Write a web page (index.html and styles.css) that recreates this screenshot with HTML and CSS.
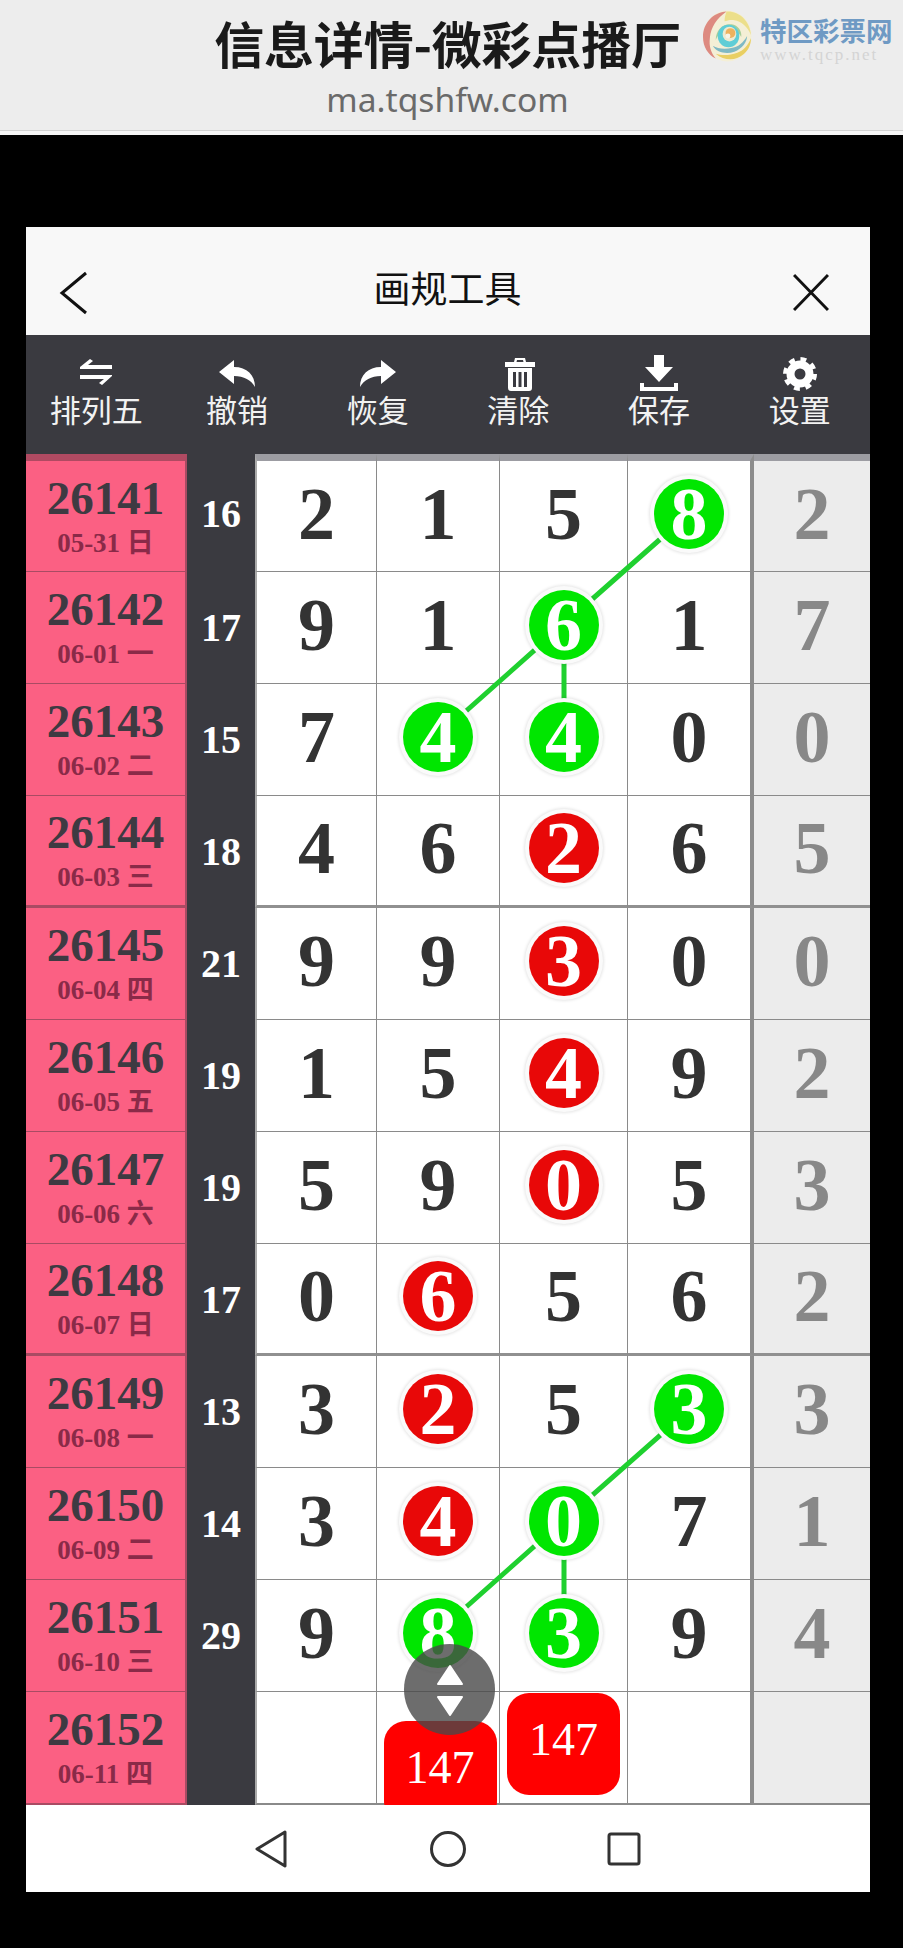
FILE: index.html
```html
<!DOCTYPE html>
<html lang="zh-CN">
<head>
  <meta charset="UTF-8" />
  <meta name="viewport" content="width=device-width, initial-scale=1.0" />
  <title>信息详情-微彩点播厅</title>
  <link rel="stylesheet" href="styles.css">
</head>
<body>
  <header class="site-head">
    <div class="site-title">信息详情-微彩点播厅</div>
    <div class="site-url">ma.tqshfw.com</div>
    <div class="brand">
      <svg class="brand-logo" viewBox="0 0 50 52">
        <ellipse cx="25" cy="26" rx="24.5" ry="26" fill="#f4efd6"/>
        <path d="M24 1C10 2 0 13 0 27c0 10 5 18 13 22-5-6-7-13-6-21C8 17 14 8 24 1Z" fill="#dd8a80"/>
        <path d="M24 1c12-1 24 9 25 24-4-9-10-14-17-15-3-1-7 0-10 1 0-4 1-7 2-10Z" fill="#ecdf8a"/>
        <path d="M13 44c8 7 20 8 28 1 5-4 8-10 8-17-3 8-8 13-14 15-8 3-16 3-22 1Z" fill="#e9cf63"/>
        <path d="M10 36c4 7 14 9 22 6 8-3 13-10 13-16-4 7-9 11-15 12-8 2-15 1-20-2Z" fill="#7fb9c4"/>
        <path d="M13 30c0-10 7-17 16-16 7 1 11 7 10 13-3-6-7-9-12-9-6 0-11 5-14 12Z" fill="#a8cf9a"/>
        <ellipse cx="26" cy="26" rx="11" ry="11.5" fill="#5fcdd6"/>
        <ellipse cx="27" cy="24" rx="7" ry="7.5" fill="#f0ead0"/>
        <ellipse cx="28" cy="23" rx="5" ry="5" fill="#eeb25e"/>
        <ellipse cx="25.5" cy="26" rx="2.5" ry="2.5" fill="#f8f4e8"/>
      </svg>
      <div class="brand-text">
        <div class="brand-name">特区彩票网</div>
        <div class="brand-site">www.tqcp.net</div>
      </div>
    </div>
  </header>

  <main class="card">
    <div class="titlebar">
      <svg class="bar-icon" viewBox="0 0 36 44"><path d="M30 2 6 22l24 20"/></svg>
      <div class="bar-title">画规工具</div>
      <svg class="bar-icon" viewBox="0 0 36 44"><path d="M1 4l34 35M35 4 1 39"/></svg>
    </div>

    <nav class="toolbar">
      <div class="tool">
        <svg class="tool-icon" viewBox="0 0 38 36"><path d="M3 12 13 4l3 2-5 4h24v4H3ZM35 21 25 30l-3-2 5-4H3v-4h32Z"/></svg>
        <span>排列五</span>
      </div>
      <div class="tool">
        <svg class="tool-icon" viewBox="0 0 38 36"><path d="M1 17 16 5v7c13 0 21 8 21 20-4-7-11-11-21-11v8Z"/></svg>
        <span>撤销</span>
      </div>
      <div class="tool">
        <svg class="tool-icon" viewBox="0 0 38 36"><path d="M37 17 22 5v7C9 12 1 20 1 32c4-7 11-11 21-11v8Z"/></svg>
        <span>恢复</span>
      </div>
      <div class="tool tool-bin">
        <svg class="tool-icon" viewBox="0 0 38 36"><path fill-rule="evenodd" d="M14 3h10l1 4h9v5H4V7h9ZM16 5l-.5 2h7L22 5ZM7 13h24v20a3 3 0 0 1-3 3H10a3 3 0 0 1-3-3ZM12 17v15h3V17ZM17.500 17v15h3V17ZM23 17v15h3V17Z"/></svg>
        <span>清除</span>
      </div>
      <div class="tool">
        <svg class="tool-icon" viewBox="0 0 38 36"><path d="M14 0h10v12h9L19 27 5 12h9ZM0 28h4v4h30v-4h4v8H0Z"/></svg>
        <span>保存</span>
      </div>
      <div class="tool">
        <svg class="tool-icon" viewBox="0 0 38 36">
          <circle class="gear-body" cx="19" cy="19" r="9.5"/>
          <circle class="gear-teeth" cx="19" cy="19" r="14.5"/>
        </svg>
        <span>设置</span>
      </div>
    </nav>

    <section class="board">
      <svg class="links" viewBox="0 0 844 1351">
        <path d="M665 58 538 170 412 282M538 170V282"/>
        <path d="M665 954 538 1066 412 1178M538 1066V1178"/>
      </svg>

      <div class="row row-first">
        <div class="issue"><b>26141</b><small>05-31 日</small></div>
        <div class="sum">16</div>
        <div class="num">2</div><div class="num">1</div><div class="num">5</div>
        <div class="num num-end"><i class="ball green">8</i></div>
        <div class="num tail">2</div>
      </div>
      <div class="row">
        <div class="issue"><b>26142</b><small>06-01 一</small></div>
        <div class="sum">17</div>
        <div class="num">9</div><div class="num">1</div>
        <div class="num"><i class="ball green">6</i></div>
        <div class="num num-end">1</div>
        <div class="num tail">7</div>
      </div>
      <div class="row">
        <div class="issue"><b>26143</b><small>06-02 二</small></div>
        <div class="sum">15</div>
        <div class="num">7</div>
        <div class="num"><i class="ball green">4</i></div>
        <div class="num"><i class="ball green">4</i></div>
        <div class="num num-end">0</div>
        <div class="num tail">0</div>
      </div>
      <div class="row row-split">
        <div class="issue"><b>26144</b><small>06-03 三</small></div>
        <div class="sum">18</div>
        <div class="num">4</div><div class="num">6</div>
        <div class="num"><i class="ball red">2</i></div>
        <div class="num num-end">6</div>
        <div class="num tail">5</div>
      </div>
      <div class="row">
        <div class="issue"><b>26145</b><small>06-04 四</small></div>
        <div class="sum">21</div>
        <div class="num">9</div><div class="num">9</div>
        <div class="num"><i class="ball red">3</i></div>
        <div class="num num-end">0</div>
        <div class="num tail">0</div>
      </div>
      <div class="row">
        <div class="issue"><b>26146</b><small>06-05 五</small></div>
        <div class="sum">19</div>
        <div class="num">1</div><div class="num">5</div>
        <div class="num"><i class="ball red">4</i></div>
        <div class="num num-end">9</div>
        <div class="num tail">2</div>
      </div>
      <div class="row">
        <div class="issue"><b>26147</b><small>06-06 六</small></div>
        <div class="sum">19</div>
        <div class="num">5</div><div class="num">9</div>
        <div class="num"><i class="ball red">0</i></div>
        <div class="num num-end">5</div>
        <div class="num tail">3</div>
      </div>
      <div class="row row-split">
        <div class="issue"><b>26148</b><small>06-07 日</small></div>
        <div class="sum">17</div>
        <div class="num">0</div>
        <div class="num"><i class="ball red">6</i></div>
        <div class="num">5</div>
        <div class="num num-end">6</div>
        <div class="num tail">2</div>
      </div>
      <div class="row">
        <div class="issue"><b>26149</b><small>06-08 一</small></div>
        <div class="sum">13</div>
        <div class="num">3</div>
        <div class="num"><i class="ball red">2</i></div>
        <div class="num">5</div>
        <div class="num num-end"><i class="ball green">3</i></div>
        <div class="num tail">3</div>
      </div>
      <div class="row">
        <div class="issue"><b>26150</b><small>06-09 二</small></div>
        <div class="sum">14</div>
        <div class="num">3</div>
        <div class="num"><i class="ball red">4</i></div>
        <div class="num"><i class="ball green">0</i></div>
        <div class="num num-end">7</div>
        <div class="num tail">1</div>
      </div>
      <div class="row">
        <div class="issue"><b>26151</b><small>06-10 三</small></div>
        <div class="sum">29</div>
        <div class="num">9</div>
        <div class="num"><i class="ball green">8</i></div>
        <div class="num"><i class="ball green">3</i></div>
        <div class="num num-end">9</div>
        <div class="num tail">4</div>
      </div>
      <div class="row row-last">
        <div class="issue"><b>26152</b><small>06-11 四</small></div>
        <div class="sum"></div>
        <div class="num"></div>
        <div class="num num-tile"><div class="tile tile-low">147</div></div>
        <div class="num num-tile"><div class="tile tile-high">147</div></div>
        <div class="num num-end"></div>
        <div class="num tail"></div>
      </div>

      <div class="updown">
        <svg viewBox="0 0 30 52"><path d="M15 2 27 20H3Z"/><path d="M3 33h24L15 51Z"/></svg>
      </div>
    </section>

    <footer class="navbar">
      <svg viewBox="0 0 36 38"><path d="M31 2 3 19l28 17Z"/></svg>
      <svg viewBox="0 0 36 38"><circle cx="18" cy="19" r="16.500"/></svg>
      <svg viewBox="0 0 36 38"><rect x="3" y="4" width="30" height="30" rx="2"/></svg>
    </footer>
  </main>
</body>
</html>
```

FILE: styles.css
```css
body {
  margin: 0;
  background-color: #000;
  font-family: "Noto Sans CJK SC", "Noto Sans", sans-serif;
}

/* site header */
.site-head {
  position: relative;
  box-sizing: border-box;
  display: flex;
  flex-direction: column;
  align-items: center;
  height: 135px;
  padding: 9px 8px 0 0;
  background-color: #ededed;
  border-bottom: 4px solid #f6f6f6;
  box-shadow: inset 0 -1px #d2d2d2;
}
.site-title {
  font-size: 50px;
  font-weight: 700;
  line-height: 66px;
  letter-spacing: -0.2px;
  color: #1a1a1a;
}
.site-url {
  font-family: "Noto Sans", sans-serif;
  font-size: 33.600px;
  line-height: 48px;
  color: #6a6a6a;
}
.brand {
  position: absolute;
  top: 10px;
  left: 703px;
  display: flex;
  gap: 8px;
}
.brand-logo {
  width: 49px;
  height: 52px;
}
.brand-text {
  padding-top: 4px;
}
.brand-name {
  font-size: 26.500px;
  font-weight: 700;
  line-height: 31px;
  white-space: nowrap;
  color: #6f9ac4;
}
.brand-site {
  font-family: "Liberation Serif", serif;
  font-size: 17px;
  line-height: 20px;
  letter-spacing: 2px;
  color: #d4d4d4;
}

/* card */
.card {
  width: 844px;
  margin: 92px 0 0 26px;
}
.titlebar {
  box-sizing: border-box;
  display: flex;
  align-items: center;
  justify-content: space-between;
  height: 108px;
  padding: 24px 41px 0 30px;
  background-color: #f8f8f8;
}
.bar-icon {
  width: 36px;
  height: 44px;
  fill: none;
  stroke: #111;
  stroke-width: 3;
}
.bar-title {
  margin: -12px 0 0 10px;
  font-size: 37px;
  color: #111;
}

/* toolbar */
.toolbar {
  box-sizing: border-box;
  display: grid;
  grid-template-columns: repeat(6, 1fr);
  height: 119px;
  padding-top: 20px;
  background-color: #3a3a40;
}
.tool {
  display: flex;
  flex-direction: column;
  align-items: center;
  font-size: 31px;
  line-height: 35px;
  color: #f2f2f2;
}
.tool-bin .tool-icon {
  margin-left: 3px;
}
.tool-icon {
  width: 38px;
  height: 36px;
  fill: #fff;
}
.gear-body {
  fill: none;
  stroke: #fff;
  stroke-width: 8;
}
.gear-teeth {
  fill: none;
  stroke: #fff;
  stroke-width: 5;
  stroke-dasharray: 5.7 5.69;
}

/* board */
.board {
  position: relative;
  overflow: hidden;
  font-family: "Liberation Serif", "Noto Sans CJK SC", serif;
}
.links {
  position: absolute;
  top: 0;
  left: 0;
  z-index: 1;
  width: 844px;
  height: 1351px;
  fill: none;
  stroke: #1fd02f;
  stroke-width: 5;
}
.row {
  display: grid;
  grid-template-columns: 161px 68px 122px 123px 128px 126px 116px;
  grid-template-rows: 100%;
  height: 112px;
}
.row-last {
  height: 113px;
}
.issue,
.num {
  box-sizing: border-box;
  display: flex;
  align-items: center;
  justify-content: center;
  padding-bottom: 5px;
  border-bottom: 1px solid #8a8a8a;
}
.issue {
  flex-direction: column;
  gap: 9px;
  padding-bottom: 2px;
  background-color: #fb6083;
  border-right: 2px solid #a94b63;
  border-bottom-color: #a94b63;
  color: #3e3a42;
}
.issue b {
  font-size: 47px;
  line-height: 46px;
}
.issue small {
  font-size: 27px;
  font-weight: 700;
  line-height: 26px;
  color: #8a2a48;
}
.sum {
  display: flex;
  align-items: center;
  justify-content: center;
  padding-bottom: 2px;
  background-color: #3a3a40;
  font-size: 40px;
  font-weight: 700;
  color: #fff;
}
.num {
  background-color: #fff;
  border-right: 1px solid #8a8a8a;
  font-size: 74px;
  font-weight: 700;
  line-height: 1;
  color: #333;
}
.sum + .num {
  border-left: 2px solid #aaa;
}
.num-end {
  border-right: 4px solid #8c8c8c;
}
.tail {
  background-color: #ececec;
  border-right: 0;
  color: #888;
}
.num-tile {
  align-items: flex-start;
  padding-bottom: 0;
}
.row-first {
  height: 118px;
}
.row-first .sum {
  padding-bottom: 0;
}
.row-first .issue,
.row-first .num {
  border-top: 7px solid #9c9ca2;
}
.row-first .issue {
  border-top-color: #b04a62;
}
.row-split .issue,
.row-split .num {
  border-bottom: 3px solid #909090;
}
.row-split .issue {
  border-bottom-color: #a94b63;
}
.row-last .issue,
.row-last .num {
  border-bottom-width: 2px;
}

/* drawn numbers */
.ball {
  position: relative;
  z-index: 2;
  display: flex;
  align-items: center;
  justify-content: center;
  width: 70px;
  height: 70px;
  border-radius: 50%;
  box-shadow: 0 0 0 4px #fafafa, 0 0 3px 5px rgba(0, 0, 0, 0.1);
  font-style: normal;
  color: #fff;
}
.green {
  background-color: #00e600;
}
.red {
  background-color: #e80808;
}
.tile {
  flex-shrink: 0;
  position: relative;
  z-index: 2;
  box-sizing: border-box;
  width: 113px;
  height: 102px;
  padding-bottom: 8px;
  background-color: #f00;
  border-radius: 22px;
  font-size: 46px;
  font-weight: 400;
  line-height: 94px;
  text-align: center;
  color: #fff;
}
.tile-high {
  margin-top: 1px;
}
.tile-low {
  margin: 29px 0 0 4px;
}

/* floating up/down handle */
.updown {
  position: absolute;
  top: 1190px;
  left: 378px;
  z-index: 3;
  display: flex;
  align-items: center;
  justify-content: center;
  width: 91px;
  height: 91px;
  background-color: rgba(72, 72, 72, 0.8);
  border-radius: 50%;
}
.updown svg {
  width: 30px;
  height: 52px;
  fill: #fff;
  stroke: #fff;
  stroke-width: 2;
  stroke-linejoin: round;
}

/* bottom nav */
.navbar {
  display: flex;
  align-items: center;
  justify-content: center;
  gap: 140px;
  height: 87px;
  background-color: #fff;
}
.navbar svg {
  width: 36px;
  height: 38px;
  fill: none;
  stroke: #333;
  stroke-width: 3;
  stroke-linejoin: round;
}
```
